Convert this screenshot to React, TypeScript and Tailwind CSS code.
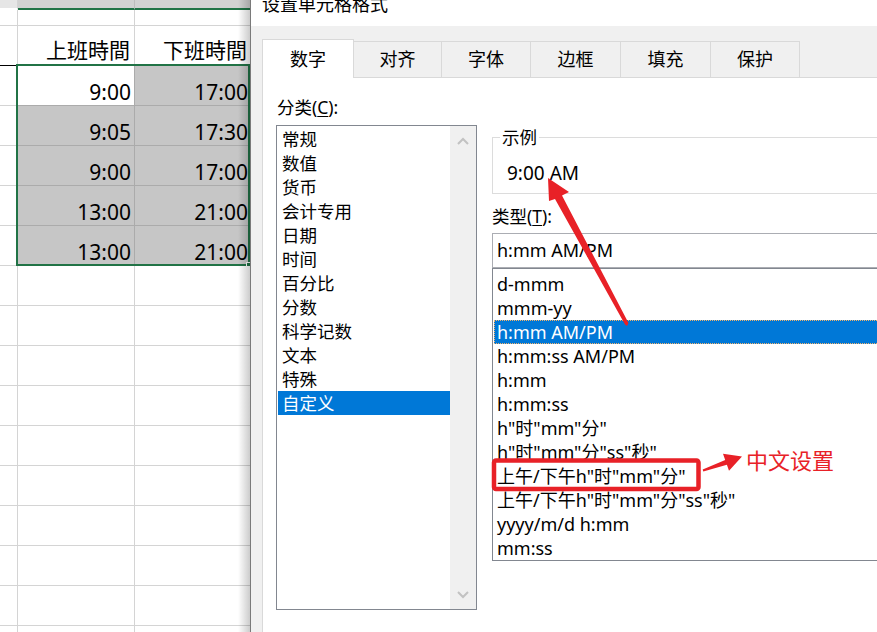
import React from 'react';

const categories = ['常规', '数值', '货币', '会计专用', '日期', '时间', '百分比', '分数', '科学记数', '文本', '特殊', '自定义'];

const types = [
  'd-mmm',
  'mmm-yy',
  'h:mm AM/PM',
  'h:mm:ss AM/PM',
  'h:mm',
  'h:mm:ss',
  'h"时"mm"分"',
  'h"时"mm"分"ss"秒"',
  '上午/下午h"时"mm"分"',
  '上午/下午h"时"mm"分"ss"秒"',
  'yyyy/m/d h:mm',
  'mm:ss',
];

const tabs = [
  { label: '数字', w: 'w-[92px]' },
  { label: '对齐', w: 'w-[88px]' },
  { label: '字体', w: 'w-[89px]' },
  { label: '边框', w: 'w-[90px]' },
  { label: '填充', w: 'w-[90px]' },
  { label: '保护', w: 'w-[89px]' },
];

const times = [
  ['9:00', '17:00'],
  ['9:05', '17:30'],
  ['9:00', '17:00'],
  ['13:00', '21:00'],
  ['13:00', '21:00'],
];

const Chevron = ({ down }: { down?: boolean }) => (
  <svg width="12" height="8" viewBox="0 0 12 8">
    <polyline
      points={down ? '1,1 6,6 11,1' : '1,7 6,2 11,7'}
      fill="none"
      stroke="#c2c2c2"
      strokeWidth="2"
    />
  </svg>
);

const Sheet: React.FC = () => (
  <div className="relative w-[250px] h-full shrink-0 flex flex-col overflow-hidden">
    {/* column header strip */}
    <div className="flex h-[10px] shrink-0">
      <div className="w-[18px] bg-[#e6e6e6] border-r border-r-[#d4d4d4] border-b-2 border-b-white" />
      <div className="w-[117px] bg-[#d2d2d2] border-r border-r-[#bdbdbd] border-b-2 border-b-[#217346]" />
      <div className="flex-1 bg-[#d2d2d2] border-b-2 border-b-[#217346]" />
    </div>
    <div className="flex h-[16px] shrink-0">
      <div className="w-[18px] border-r border-b border-[#d4d4d4]" />
      <div className="w-[117px] border-r border-b border-[#d4d4d4]" />
      <div className="flex-1 border-b border-[#d4d4d4]" />
    </div>
    {/* header row */}
    <div className="flex h-[40px] shrink-0 text-[21px] leading-[26px]">
      <div className="w-[18px] border-r border-r-[#d4d4d4] border-b border-b-black" />
      <div className="w-[117px] border-r border-b border-[#d4d4d4] flex items-end justify-end pr-[4px] pb-[2px]">
        上班時間
      </div>
      <div className="flex-1 border-b border-[#d4d4d4] flex items-end justify-end pr-[3px] pb-[2px]">
        下班時間
      </div>
    </div>
    {times.map(([a, b], i) => (
      <div key={i} className="flex h-[40px] shrink-0 text-[21px] leading-[26px]">
        <div className="w-[18px] border-r border-b border-[#d4d4d4]" />
        <div
          className={`w-[117px] border-r border-b border-[#ababab] flex items-end justify-end pr-[3px] ${
            i === 0 ? 'bg-white' : 'bg-[#c6c6c6]'
          }`}
        >
          {a}
        </div>
        <div className="flex-1 border-b border-[#ababab] bg-[#c6c6c6] flex items-end justify-end pr-[2px]">{b}</div>
      </div>
    ))}
    {Array.from({ length: 10 }).map((_, i) => (
      <div key={i} className="flex h-[40px] shrink-0">
        <div className="w-[18px] border-r border-b border-[#d4d4d4]" />
        <div className="w-[117px] border-r border-b border-[#d4d4d4]" />
        <div className="flex-1 border-b border-[#d4d4d4]" />
      </div>
    ))}

    {/* selection frame */}
    <div className="absolute left-[16px] top-[64px] w-[234px] h-[202px] border-2 border-[#217346]" />
    <div className="absolute left-[246px] top-[262px] w-[5px] h-[5px] bg-[#217346] border border-white" />
    {/* dialog shadow */}
    <div className="absolute right-0 top-0 w-[12px] h-full bg-linear-to-r from-transparent to-black/20" />
  </div>
);

const Dialog: React.FC = () => (
  <div className="flex-1 min-w-0 h-full border-l border-l-[#7a7a7a] bg-[#f0f0f0] flex flex-col">
    <div className="h-[26px] shrink-0 bg-white overflow-hidden pl-[11px]">
      <div className="text-[18px] leading-[22px] -mt-[7px] whitespace-nowrap">设置单元格格式</div>
    </div>

    <div className="flex-1 min-h-0 flex flex-col pl-[11px] pt-[13px]">
      {/* tabs */}
      <div className="relative z-10 flex items-end h-[38px] shrink-0">
        {tabs.map((t, i) =>
          i === 0 ? (
            <div
              key={t.label}
              className={`${t.w} h-[39px] -mb-[1px] bg-white border-l border-t border-r border-[#d9d9d9] flex items-center justify-center text-[18px]`}
            >
              {t.label}
            </div>
          ) : (
            <div
              key={t.label}
              className={`${t.w} h-[36px] bg-[#f0f0f0] border-t border-r border-[#d9d9d9] flex items-center justify-center text-[18px]`}
            >
              {t.label}
            </div>
          )
        )}
      </div>

      {/* tab page */}
      <div className="flex-1 min-h-0 overflow-hidden bg-white border-l border-t border-[#d9d9d9] flex pl-[13px]">
        {/* category */}
        <div className="w-[201px] shrink-0 flex flex-col">
          <div className="mt-[17px] pl-[1px] text-[17.5px] leading-[24px]">
            分类(<span className="underline underline-offset-2">C</span>):
          </div>
          <div className="mt-[6px] h-[485px] border border-[#828790] flex">
            <div className="flex-1 pt-[1px] pl-[1px]">
              {categories.map((c) => (
                <div
                  key={c}
                  className={`h-[24px] leading-[24px] pl-[4px] text-[17.5px] ${
                    c === '自定义' ? 'bg-[#0078d7] text-white' : ''
                  }`}
                >
                  {c}
                </div>
              ))}
            </div>
            <div className="w-[26px] bg-[#f0f0f0] flex flex-col items-center justify-between pt-[11px] pb-[10px]">
              <Chevron />
              <Chevron down />
            </div>
          </div>
        </div>

        {/* sample + type */}
        <div className="ml-[15px] w-[420px] shrink-0 flex flex-col pt-[49px]">
          <fieldset className="border border-[#dcdcdc] pb-[8px]">
            <legend className="ml-[7px] px-[2px] text-[17.5px] leading-[20px]">示例</legend>
            <div className="pt-[14px] pl-[14px] text-[19px] leading-[24px]">9:00 AM</div>
          </fieldset>

          <div className="mt-[10px] text-[17.5px] leading-[24px]">
            类型(<span className="underline underline-offset-2">T</span>):
          </div>
          <div className="mt-[5px] h-[35px] border border-[#abadb3] flex items-center pl-[4px] text-[18px]">
            h:mm AM/PM
          </div>
          <div className="h-[293px] border border-[#828790] pt-[3px]">
            {types.map((t) => (
              <div
                key={t}
                className={`ml-[1px] h-[24px] leading-[24px] pl-[3px] text-[18px] whitespace-nowrap ${
                  t === 'h:mm AM/PM'
                    ? 'bg-[#0078d7] text-white outline outline-1 outline-dotted outline-[#f3b36b] -outline-offset-1'
                    : ''
                }`}
              >
                {t}
              </div>
            ))}
          </div>
        </div>
      </div>
    </div>
  </div>
);

export default function App() {
  return (
    <div className="relative w-[877px] h-[632px] overflow-hidden bg-white flex text-black font-['Noto_Sans','Noto_Sans_CJK_SC',sans-serif]">
      <Sheet />
      <Dialog />

      {/* red annotations */}
      <svg className="absolute left-0 top-0 pointer-events-none" width="877" height="632" viewBox="0 0 877 632">
        <polygon
          fill="#e82127"
          points="548,178 569,192 562,195.5 628.5,323 627,326 625,324.5 555,199 549,201"
        />
        <rect x="494" y="460.5" width="204.5" height="28.5" rx="2" fill="none" stroke="#e82127" strokeWidth="4.5" />
        <polygon
          fill="#e82127"
          points="702.7,469.6 725.2,459.9 723,453.8 742,456.5 729,470.8 726.9,464.7 703.3,471.6"
        />
      </svg>
      <span className="absolute left-[746px] top-[448px] text-[22px] leading-[22px] text-[#e82127] font-['Noto_Sans_CJK_SC',sans-serif]">
        中文设置
      </span>
    </div>
  );
}
